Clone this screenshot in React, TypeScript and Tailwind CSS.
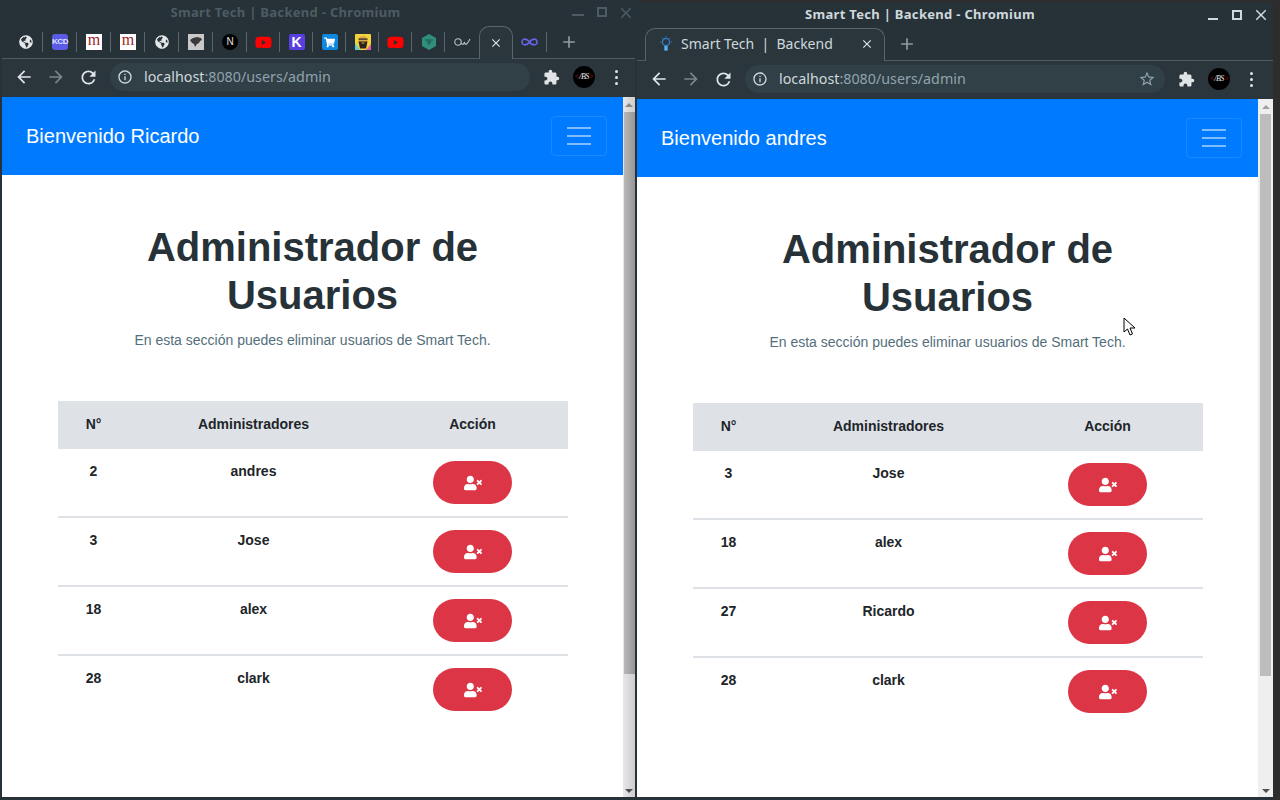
import type { ReactNode } from "react";
import { FaUserTimes, FaGlobeAmericas, FaYoutube, FaShoppingCart } from "react-icons/fa";
import { MdArrowBack, MdArrowForward, MdRefresh, MdInfoOutline, MdStarBorder, MdExtension, MdClose, MdAdd } from "react-icons/md";

const leftRows = [
  { id: 2, name: "andres" },
  { id: 3, name: "Jose" },
  { id: 18, name: "alex" },
  { id: 28, name: "clark" },
];

const rightRows = [
  { id: 3, name: "Jose" },
  { id: 18, name: "alex" },
  { id: 27, name: "Ricardo" },
  { id: 28, name: "clark" },
];

function Globe() {
  return <FaGlobeAmericas size={14} className="text-[#e4e7e8]" />;
}

function Kcd() {
  return (
    <div className="flex h-4 w-4 items-center justify-center rounded-[3px] bg-[#5b5be6] text-[8px] font-bold leading-none tracking-[-0.5px] text-[#dfe3ff] font-['Liberation_Sans',sans-serif]">
      KCD
    </div>
  );
}

function Medium() {
  return (
    <div className="flex h-4 w-4 items-start justify-center bg-white text-[16px] leading-[11px] text-[#9c1f1f] font-['Liberation_Serif',serif]">
      m
    </div>
  );
}

function Panther() {
  return (
    <div className="flex h-4 w-4 items-center justify-center bg-[#c9c9c9]">
      <svg width="12" height="10" viewBox="0 0 12 10">
        <path d="M0 3 L3 1 L7 0 L11 1 L12 3 L10 4 L9 6 L7 7 L5 10 L4 7 L2 6 Z" fill="#3a3a3a" />
      </svg>
    </div>
  );
}

function NextIcon() {
  return (
    <div className="flex h-4 w-4 items-center justify-center rounded-full bg-black text-[10px] leading-none text-[#e0e0e0] font-['Liberation_Sans',sans-serif]">
      N
    </div>
  );
}

function KIcon() {
  return (
    <div className="flex h-4 w-4 items-center justify-center rounded-[2px] bg-[#5a3fe0] text-[14px] font-bold leading-none text-white font-['Liberation_Sans',sans-serif]">
      K
    </div>
  );
}

function Cart() {
  return (
    <div className="flex h-4 w-4 items-center justify-center rounded-[2px] bg-[#0f86e0]">
      <FaShoppingCart size={11} className="text-white" />
    </div>
  );
}

function Avatar() {
  return (
    <svg width="16" height="16" viewBox="0 0 16 16">
      <rect width="16" height="16" rx="1" fill="#f3d43c" />
      <path d="M11 16 L16 10 L16 16 Z" fill="#e05fb0" />
      <path d="M0 9 L5 16 L0 16 Z" fill="#63d0d8" />
      <circle cx="8" cy="6.5" r="4.5" fill="#d9a94a" />
      <path d="M3.5 7.5 H12.5 L11 14.5 H5 Z" fill="#2a2320" />
      <rect x="3.5" y="4.5" width="9" height="1.2" fill="#2a2320" />
      <rect x="6.5" y="8.5" width="3" height="1" fill="#d9a94a" />
    </svg>
  );
}

function Hexagon() {
  return (
    <svg width="16" height="16" viewBox="0 0 16 16">
      <path d="M8 0 L15 4 V12 L8 16 L1 12 V4 Z" fill="#2f8f7c" />
      <path d="M4 6 H12 M5.5 8 H10.5 M8 6 V11" stroke="#1b5b50" strokeWidth="1.2" />
    </svg>
  );
}

function OwIcon() {
  return (
    <svg width="17" height="10" viewBox="0 0 17 10" fill="none" stroke="#b8c2c6" strokeWidth="1.1">
      <circle cx="4" cy="5" r="3.2" />
      <path d="M7.2 5.5 C8.5 8.5 9.5 8 10.5 5 C11 8.5 12.5 8.5 16 2" />
    </svg>
  );
}

function Infinity8() {
  return (
    <svg width="17" height="10" viewBox="0 0 17 10" fill="none" stroke="#6a63e8" strokeWidth="1.6">
      <path d="M8.5 5 C6.5 1.5 1 0.8 1 5 C1 9.2 6.5 8.5 8.5 5 C10.5 1.5 16 0.8 16 5 C16 9.2 10.5 8.5 8.5 5 Z" />
    </svg>
  );
}

function Bulb() {
  return (
    <svg width="14" height="16" viewBox="0 0 14 16" fill="none">
      <circle cx="7" cy="6" r="3.6" stroke="#2f80c8" strokeWidth="1.3" />
      <path d="M7 0 V1.2 M1 6 H2.2 M11.8 6 H13 M2.6 1.8 L3.5 2.7 M11.4 1.8 L10.5 2.7" stroke="#2f80c8" strokeWidth="1" />
      <rect x="5.3" y="10" width="3.4" height="4.6" fill="#58b2f0" />
    </svg>
  );
}

function YouTube() {
  return <FaYoutube size={17} className="text-[#f00]" />;
}

function BsLogo() {
  return (
    <div className="flex h-[22px] w-[22px] items-center justify-center rounded-full bg-black text-[8px] italic leading-none tracking-[-0.5px] font-['Liberation_Serif',serif]">
      <span className="text-[#c01020]">&lt;</span>
      <span className="text-[#e6e6e6]">/BS</span>
      <span className="text-[#c01020]">&gt;</span>
    </div>
  );
}

function MiniTab({ children, last, wide }: { children: ReactNode; last?: boolean; wide?: boolean }) {
  return (
    <div className={`relative flex h-[33px] shrink-0 items-center justify-center ${wide ? "w-[34px]" : "w-[33px]"}`}>
      {children}
      {!last && <div className="absolute right-0 top-[6px] h-[20px] w-px bg-[#59656a]" />}
    </div>
  );
}

function LeftTabs() {
  const icons = [
    <Globe />, <Kcd />, <Medium />, <Medium />, <Globe />, <Panther />, <NextIcon />,
    <YouTube />, <KIcon />, <Cart />, <Avatar />, <YouTube />, <Hexagon />, <OwIcon />,
  ];
  return (
    <div className="flex h-[33px] items-center border-b border-[#4f5b60] pl-[7px]">
      {icons.map((icon, i) => (
        <MiniTab key={i} last={i === 13} wide={i < 7 || i === 13}>{icon}</MiniTab>
      ))}
      <div className="relative z-10 -mb-px flex h-[33px] w-[33.5px] shrink-0 items-center justify-center rounded-t-[10px] border-x border-t border-[#59656a] bg-[#2a363c]">
        <MdClose size={14} className="text-[#dfe4e6]" />
      </div>
      <MiniTab wide>
        <Infinity8 />
      </MiniTab>
      <MdAdd size={20} className="ml-[12px] text-[#8f9a9f]" />
    </div>
  );
}

function RightTabs() {
  return (
    <div className="flex h-[33px] items-center border-b border-[#4f5b60] pl-[8px]">
      <div className="relative z-10 -mb-px flex h-[33px] w-[240px] shrink-0 items-center rounded-t-[10px] border-x border-t border-[#59656a] bg-[#2a363c] pb-[3px] pl-[13px] pr-[10px] text-[14px] text-[#cfd8dc] font-['Noto_Sans',sans-serif]">
        <Bulb />
        <span className="ml-[8px] flex-1 whitespace-pre">Smart Tech  |  Backend</span>
        <MdClose size={14} className="text-[#dfe4e6]" />
      </div>
      <MdAdd size={20} className="ml-[12px] text-[#8f9a9f]" />
    </div>
  );
}

function Toolbar({ star }: { star?: boolean }) {
  return (
    <div className="flex h-[38px] items-center bg-[#2a363c] pb-[2px] pl-[12px] font-['Noto_Sans',sans-serif]">
      <MdArrowBack size={20} className="text-[#dfe4e6]" />
      <MdArrowForward size={20} className="ml-[12px] text-[#79858a]" />
      <MdRefresh size={21} className="ml-[12px] text-[#dfe4e6]" />
      <div className="ml-[11px] flex h-[28px] w-[420px] items-center rounded-full bg-[#313f46] pl-[7px] pr-[9px]">
        <MdInfoOutline size={16} className="text-[#cfd8dc]" />
        <span className="ml-[11px] flex-1 pb-px text-[14.3px] text-[#90a4ae]">
          <span className="text-[#cfd8dc]">localhost</span>:8080/users/admin
        </span>
        {star && <MdStarBorder size={18} className="text-[#90a4ae]" />}
      </div>
      <MdExtension size={17} className="ml-[13px] text-[#dfe4e6]" />
      <div className="ml-[13px]">
        <BsLogo />
      </div>
      <div className="ml-[20px] flex flex-col gap-[3px]">
        <div className="h-[3px] w-[3px] rounded-full bg-[#dfe4e6]" />
        <div className="h-[3px] w-[3px] rounded-full bg-[#dfe4e6]" />
        <div className="h-[3px] w-[3px] rounded-full bg-[#dfe4e6]" />
      </div>
    </div>
  );
}

function Page({ name, rows }: { name: string; rows: { id: number; name: string }[] }) {
  return (
    <div className="h-full w-[621px] shrink-0 overflow-hidden bg-white font-['Liberation_Sans',sans-serif]">
      <div className="flex h-[78px] items-center justify-between bg-[#007bff] pl-[24px] pr-[16px]">
        <span className="text-[20px] text-white">Bienvenido {name}</span>
        <div className="flex h-[40px] w-[56px] flex-col items-center justify-center gap-[6px] rounded border border-white/10">
          <div className="h-[2px] w-[24px] bg-white/50" />
          <div className="h-[2px] w-[24px] bg-white/50" />
          <div className="h-[2px] w-[24px] bg-white/50" />
        </div>
      </div>
      <h1 className="mx-auto mt-[48px] w-[400px] text-center text-[40px] font-bold leading-[48px] text-[#263238]">
        Administrador de Usuarios
      </h1>
      <p className="mt-[11px] text-center text-[14px] leading-[21px] text-[#546e7a]">
        En esta sección puedes eliminar usuarios de Smart Tech.
      </p>
      <table className="ml-[56px] mt-[50px] w-[510px] table-fixed border-separate border-spacing-0 text-[14px] font-bold text-[#212529]">
        <thead>
          <tr className="h-[48px] bg-[#dee2e6]">
            <th className="w-[71px] pb-[2px] font-bold">N°</th>
            <th className="w-[249px] pb-[2px] font-bold">Administradores</th>
            <th className="pb-[2px] pr-px font-bold">Acción</th>
          </tr>
        </thead>
        <tbody>
          {rows.map((row, i) => {
            const cell = i < rows.length - 1 ? "border-b-2 border-[#dee2e6]" : "";
            return (
              <tr key={row.id} className="h-[69px]">
                <td className={`pt-[12px] text-center align-top ${cell}`}>{row.id}</td>
                <td className={`pt-[12px] text-center align-top ${cell}`}>{row.name}</td>
                <td className={`pr-px pt-[12px] align-top ${cell}`}>
                  <button className="mx-auto flex h-[43px] w-[79px] items-center justify-center rounded-full bg-[#dc3545] text-white">
                    <FaUserTimes size={18} />
                  </button>
                </td>
              </tr>
            );
          })}
        </tbody>
      </table>
    </div>
  );
}

function ScrollBar({ thumb, track, active }: { thumb: string; track: string; active?: boolean }) {
  return (
    <div className={`flex h-full flex-1 flex-col items-center ${track}`}>
      <div className={`mt-[6px] h-0 w-0 border-x-[4px] border-b-[4px] border-x-transparent ${active ? "border-b-[#a0a0a0]" : "border-b-[#8a8a8a]"}`} />
      <div className={`mt-[5px] h-[562px] w-[11px] ${thumb}`} />
      <div className="mt-auto mb-[4px] h-0 w-0 border-x-[4px] border-t-[4px] border-x-transparent border-t-[#505050]" />
    </div>
  );
}

export default function App() {
  return (
    <div className="relative h-[800px] w-[1280px] overflow-hidden bg-[#2d2d2d]">
      {/* left window, not focused */}
      <div className="absolute left-0 top-0 flex h-[800px] w-[637px] flex-col bg-[#263238] pb-[3px] pl-[2px] pr-[2px]">
        <div className="relative flex h-[26px] items-center justify-center pr-[66px] text-[13px] font-bold tracking-[0.3px] text-[#4f5b62] font-['Noto_Sans',sans-serif]">
          Smart Tech | Backend - Chromium
          <div className="absolute left-[570px] top-[14px] h-[2px] w-[12px] bg-[#4f5b62]" />
          <div className="absolute left-[595px] top-[7px] h-[10px] w-[10px] border-2 border-[#4f5b62]" />
          <MdClose size={18} className="absolute left-[615px] top-[4px] text-[#4f5b62]" />
        </div>
        <LeftTabs />
        <Toolbar />
        <div className="flex min-h-0 flex-1">
          <Page name="Ricardo" rows={leftRows} />
          <ScrollBar track="bg-linear-to-r from-[#e8e8e8] to-[#cdcdcd]" thumb="bg-linear-to-r from-[#b8b8b8] to-[#969696]" />
        </div>
      </div>

      {/* right window, focused */}
      <div className="absolute left-[637px] top-[2px] flex h-[798px] w-[636px] flex-col bg-[#263238] pb-[3px]">
        <div className="relative flex h-[26px] items-center justify-center pr-[70px] text-[13px] font-bold tracking-[0.3px] text-[#cfd8dc] font-['Noto_Sans',sans-serif]">
          Smart Tech | Backend - Chromium
          <div className="absolute left-[571px] top-[16px] h-[2px] w-[10px] bg-[#cfd8dc]" />
          <div className="absolute left-[595px] top-[8px] h-[10px] w-[10px] border-2 border-[#cfd8dc]" />
          <MdClose size={18} className="absolute left-[615px] top-[4px] text-[#cfd8dc]" />
        </div>
        <RightTabs />
        <Toolbar star />
        <div className="flex min-h-0 flex-1">
          <Page name="andres" rows={rightRows} />
          <ScrollBar track="bg-[#efefef]" thumb="bg-[#bdbdbd]" active />
        </div>
      </div>

      {/* mouse pointer */}
      <svg className="absolute left-[1123px] top-[317px]" width="14" height="20" viewBox="0 0 14 20">
        <path d="M1 1 L1 15 L4.5 12 L7 18 L9.5 17 L7 11 L12 11 Z" fill="#fff" stroke="#000" strokeWidth="1" />
      </svg>
    </div>
  );
}
